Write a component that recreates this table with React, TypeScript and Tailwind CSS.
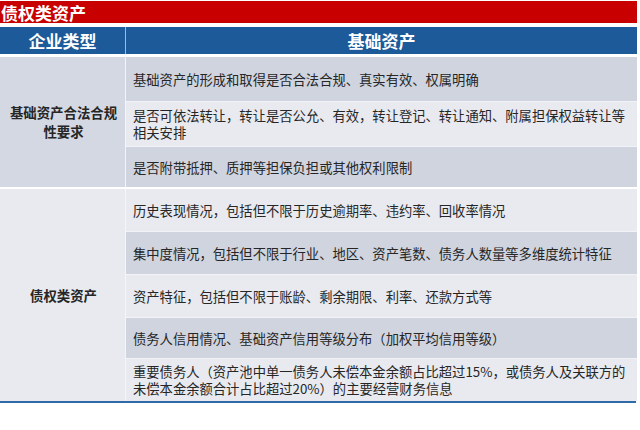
const groups = [
  {
    label: "基础资产合法合规\n性要求",
    leftBg: "bg-[#d4d8e2]",
    rows: [
      { h: "h-[44px]", bg: "bg-[#cfd4df]", text: "基础资产的形成和取得是否合法合规、真实有效、权属明确" },
      {
        h: "h-[45px]",
        bg: "bg-[#e8eaf0]",
        text: "是否可依法转让，转让是否公允、有效，转让登记、转让通知、附属担保权益转让等\n相关安排",
      },
      { h: "h-[41px]", bg: "bg-[#cfd4df]", text: "是否附带抵押、质押等担保负担或其他权利限制" },
    ],
  },
  {
    label: "债权类资产",
    leftBg: "bg-[#e8eaf0]",
    rows: [
      { h: "h-[42px]", bg: "bg-[#e8eaf0]", text: "历史表现情况，包括但不限于历史逾期率、违约率、回收率情况" },
      { h: "h-[43px]", bg: "bg-[#cfd4df]", text: "集中度情况，包括但不限于行业、地区、资产笔数、债务人数量等多维度统计特征" },
      { h: "h-[43px]", bg: "bg-[#e8eaf0]", text: "资产特征，包括但不限于账龄、剩余期限、利率、还款方式等" },
      { h: "h-[41px]", bg: "bg-[#cfd4df]", text: "债务人信用情况、基础资产信用等级分布（加权平均信用等级）" },
      {
        h: "h-[43px]",
        bg: "bg-[#e8eaf0]",
        text: "重要债务人（资产池中单一债务人未偿本金余额占比超过15%，或债务人及关联方的\n未偿本金余额合计占比超过20%）的主要经营财务信息",
      },
    ],
  },
];

export default function App() {
  return (
    <div className="w-[640px] h-[430px] bg-white pt-[1px] font-['Noto_Sans_CJK_SC','Noto_Sans',sans-serif] text-[#262626]">
      <div className="w-[637px] h-[22px] bg-[#c80000] flex items-center pl-[1px]">
        <span className="text-white text-[17px] font-bold leading-none">债权类资产</span>
      </div>

      <div className="mt-[4px] w-[637px] h-[27px] flex bg-[#1c5a99] text-white text-[17px] font-bold">
        <div className="w-[125px] flex items-center justify-center">企业类型</div>
        <div className="w-[1px] bg-[#9fbbd8]" />
        <div className="flex-1 flex items-center justify-center">基础资产</div>
      </div>

      <div className="mt-[3px] w-[637px] flex flex-col gap-[2px]">
        {groups.map((g, gi) => (
          <div key={gi} className="flex">
            <div
              className={`w-[125px] ${g.leftBg} flex items-center justify-center text-center text-[13.4px] font-bold leading-[19px] pl-[2px]`}
            >
              <p className="whitespace-pre">{g.label}</p>
            </div>
            <div className="w-[1px] bg-[#f4f5f8]" />
            <div className="flex-1 flex flex-col">
              {g.rows.map((r, ri) => (
                <div
                  key={ri}
                  className={`${r.h} ${r.bg} flex items-center pl-[7px] text-[13.3px] leading-[17px] ${ri > 0 ? "border-t border-[#f2f3f6]" : ""}`}
                >
                  <p className="whitespace-pre">{r.text}</p>
                </div>
              ))}
            </div>
          </div>
        ))}
      </div>
      <div className="w-[636px] h-[2px] bg-[#2f6aa6]" />
    </div>
  );
}
